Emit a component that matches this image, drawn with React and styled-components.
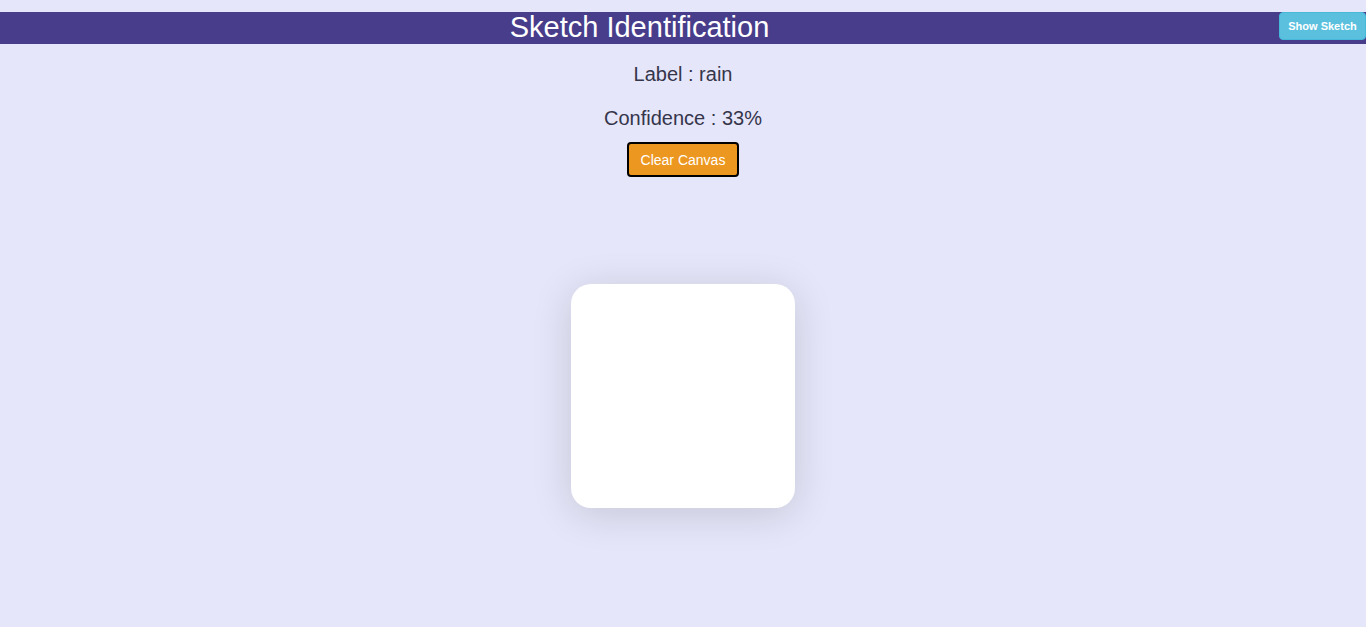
import styled, { createGlobalStyle } from "styled-components";

function App() {
  return (
    <>
      <GlobalStyle />
      <Page>
        <Header>
          <Title>Sketch Identification</Title>
          <ShowButton>Show Sketch</ShowButton>
        </Header>
        <Main>
          <Info>Label : rain</Info>
          <Info>Confidence : 33%</Info>
          <ClearButton>Clear Canvas</ClearButton>
          <Canvas />
        </Main>
      </Page>
    </>
  );
}

const GlobalStyle = createGlobalStyle`
  html, body {
    margin: 0;
    padding: 0;
    background: #e6e6fa;
    font-family: "Liberation Sans", Arial, sans-serif;
  }
`;

const Page = styled.div`
  min-height: 627px;
  padding-top: 12px;
  box-sizing: border-box;
`;

const Header = styled.header`
  display: flex;
  align-items: flex-start;
  height: 32px;
  background: #483d8b;
`;

const Title = styled.h1`
  flex: 1;
  margin: 0;
  text-align: center;
  color: #fff;
  font-size: 29px;
  font-weight: normal;
  line-height: 31px;
`;

const ShowButton = styled.button`
  width: 87px;
  height: 28px;
  padding: 0;
  border: 1px solid #46b8da;
  border-radius: 4px;
  background: #5bc0de;
  color: #fff;
  font-family: "Liberation Sans", Arial, sans-serif;
  font-size: 11px;
  font-weight: bold;
`;

const Main = styled.main`
  display: flex;
  flex-direction: column;
  align-items: center;
  padding-top: 18px;
`;

const Info = styled.p`
  margin: 0 0 20px;
  color: #35354a;
  font-size: 20px;
  line-height: 24px;
`;

const ClearButton = styled.button`
  margin-top: -8px;
  width: 112px;
  height: 35px;
  border: 2px solid #000;
  border-radius: 4px;
  background: #ec971f;
  color: #fff;
  font-family: "Liberation Sans", Arial, sans-serif;
  font-size: 14px;
`;

const Canvas = styled.div`
  margin-top: 107px;
  width: 224px;
  height: 224px;
  border-radius: 20px;
  background: #fff;
  box-shadow: 0 6px 40px rgba(0, 0, 0, 0.14);
`;

export default App;
